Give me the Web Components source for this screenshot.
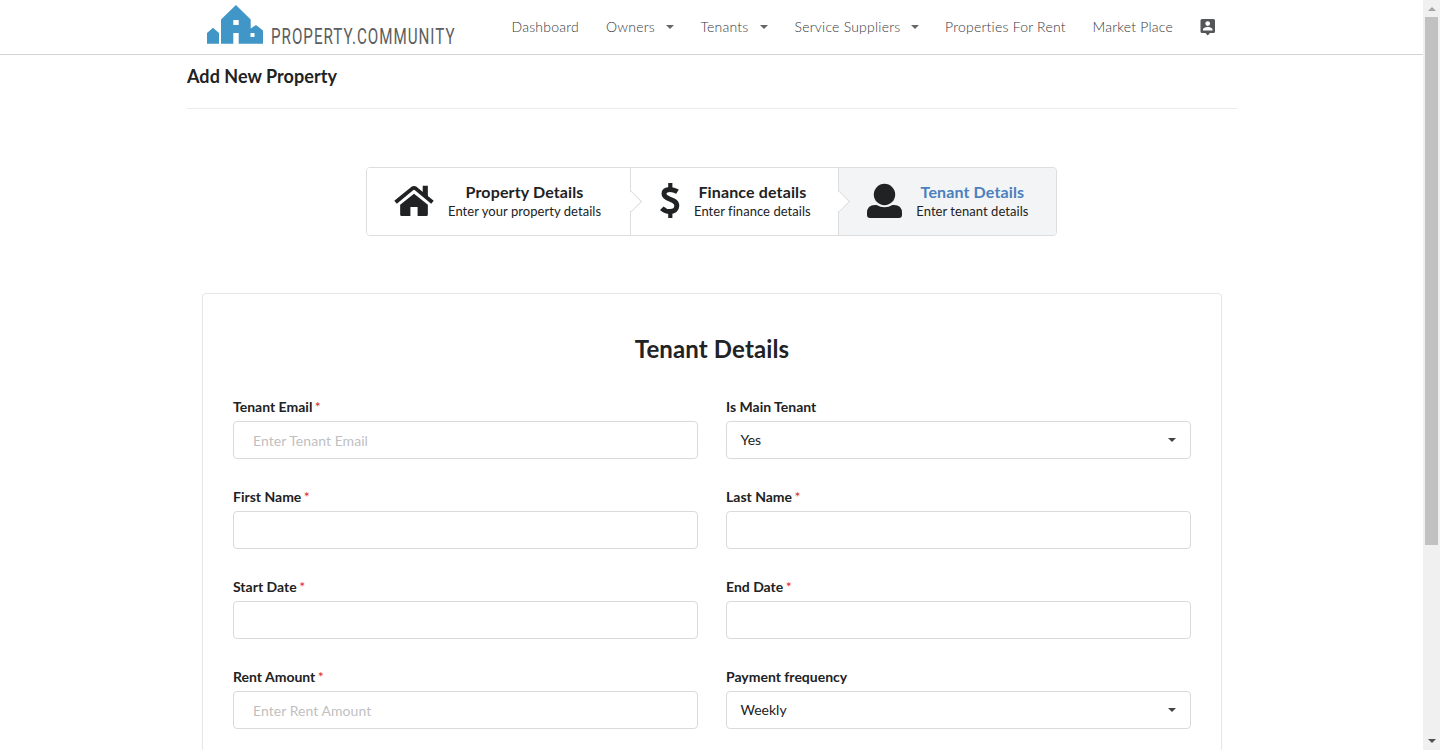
<!DOCTYPE html>
<html lang="en">
<head>
<meta charset="utf-8">
<title>Add New Property</title>
<style>
html,body{margin:0;height:100%;overflow:hidden;background:#fff}
body{font-family:Lato,"Liberation Sans",sans-serif;font-size:14px;line-height:18px;color:#212223}
</style>
</head>
<body>
<property-app></property-app>
<script>
function define(name, html) {
  const t = document.createElement('template');
  t.innerHTML = html;
  customElements.define(name, class extends HTMLElement {
    constructor() {
      super();
      this.attachShadow({ mode: 'open' }).appendChild(t.content.cloneNode(true));
    }
    connectedCallback() {
      for (const a of ['width', 'label-width', 'inset'])
        if (this.hasAttribute(a)) this.style.setProperty('--' + a, this.getAttribute(a) + 'px');
    }
  });
}

define('brand-logo', `
<style>:host{display:block;width:250px;height:48px;flex:none}svg{display:block;overflow:visible}</style>
<svg width="250" height="48" viewBox="0 0 250 48">
  <g fill="#4096c7">
    <path fill-rule="evenodd" d="M15 39.700V15.500L29.900 1 44.700 15.500V24.500L50 21 57 26.500V39.700H32.700V29H27.300V39.700ZM27.300 16V21H32.700V16ZM44.500 29V33H48.500V29Z"/>
    <path d="M1 39.700V29L7 23.800 13 29V39.700Z"/>
  </g>
  <text transform="translate(65 39.700) scale(.69 1)" font-family="Roboto,sans-serif" font-weight="400" font-size="22" fill="#5c5d60" textLength="266" lengthAdjust="spacing">PROPERTY.COMMUNITY</text>
</svg>`);

define('nav-item', `
<style>
:host{display:flex;align-items:center;width:var(--width);flex:none;font-weight:300;color:#38393b;white-space:nowrap;font-size:14px;letter-spacing:.22px}
i{display:none;width:0;height:0;border:4px solid transparent;border-top-color:#666;border-bottom:0;margin-left:11px}
:host([menu]) i{display:block}
span{display:block;width:var(--label-width)}
</style><span><slot></slot></span><i></i>`);

define('account-icon', `
<style>:host{display:block;width:16px;height:17px;flex:none}svg{display:block}</style>
<svg width="16" height="17" viewBox="0 0 16 17"><path fill="#555658" fill-rule="evenodd" d="M2 0H13.500Q15 0 15 1.500V12.500Q15 14 13.500 14H10L7.700 16.500 5.400 14H2Q.5 14 .5 12.500V1.500Q.5 0 2 0ZM7.700 2.200A2.400 2.400 0 1 0 7.700 7 2.400 2.400 0 1 0 7.700 2.200ZM3 11.500H12.500V10.500C12.500 9 9.500 8.100 7.700 8.100S3 9 3 10.500Z"/></svg>`);

define('top-bar', `
<style>
:host{display:flex;align-items:flex-start;box-sizing:border-box;height:55px;border-bottom:1px solid #d4d4d5;padding:4px 0 0 206px}
nav{display:flex;align-items:center;height:46px;margin-left:55.500px}
</style>
<brand-logo></brand-logo>
<nav>
  <nav-item width="94.500">Dashboard</nav-item>
  <nav-item width="94.500" label-width="49" menu>Owners</nav-item>
  <nav-item width="94" label-width="48" menu>Tenants</nav-item>
  <nav-item width="150.500" label-width="105" menu>Service Suppliers</nav-item>
  <nav-item width="147.500">Properties For Rent</nav-item>
  <nav-item width="107.500">Market Place</nav-item>
  <account-icon></account-icon>
</nav>`);

define('step-item', `
<style>
:host{display:flex;position:relative;box-sizing:border-box;width:var(--width);height:100%;align-items:center;gap:14px;border-right:1px solid #dcddde;background:#fff;padding:0 0 2px var(--inset)}
:host([active]){background:#f3f4f5;border-right:0}
.t{text-align:center;white-space:nowrap}
.h{font-size:16px;font-weight:700;line-height:20px;letter-spacing:.13px}
:host([active]) .h{color:#4a80bd}
.d{font-size:13px;line-height:18px;font-weight:400;letter-spacing:.05px}
.a{position:absolute;right:-9px;top:26px;width:15px;height:15px;box-sizing:border-box;background:#fff;border:solid #dcddde;border-width:0 1px 1px 0;transform:rotate(-45deg);z-index:2}
:host([active]) .a{display:none}
::slotted(svg){display:block;flex:none}
</style>
<slot name="icon"></slot>
<div class="t"><div class="h"><slot name="title"></slot></div><div class="d"><slot></slot></div></div>
<div class="a"></div>`);

define('step-group', `
<style>:host{display:flex;box-sizing:border-box;width:691px;height:69px;border:1px solid #dcddde;border-radius:4px;overflow:hidden}</style><slot></slot>`);

define('form-field', `
<style>
:host{display:block}
.l{display:flex;gap:2.500px;font-weight:700;font-size:14px;line-height:18px;height:23px;white-space:nowrap}
b{display:none;color:#db2828;font-weight:400}
:host([required]) b{display:block}
.c{display:flex;align-items:center;justify-content:space-between;box-sizing:border-box;height:38px;border:1px solid #d9dadb;border-radius:4px;background:#fff;padding:0 14px 0 13.500px;font-size:14px}
:host([entry]) .c{padding:2px 19px 0;color:#bfbfbf;letter-spacing:.05px}
i{display:none;width:0;height:0;border:4px solid transparent;border-top-color:#424344;border-bottom:0}
:host([select]) i{display:block}
</style>
<div class="l"><slot name="label"></slot><b>*</b></div>
<div class="c"><span><slot></slot></span><i></i></div>`);

define('form-card', `
<style>
:host{display:block;box-sizing:border-box;width:1020px;height:560px;border:1px solid #e6e7e8;border-radius:4px;padding:39px 30px 0}
h2{margin:0;font-size:24px;line-height:32px;font-weight:700;text-align:center;letter-spacing:.13px}
.g{display:grid;grid-template-columns:1fr 1fr;column-gap:28px;row-gap:29px;margin-top:33px}
</style>
<h2><slot name="title"></slot></h2><div class="g"><slot></slot></div>`);

define('scroll-bar', `
<style>
:host{display:flex;flex-direction:column;align-items:center;width:17px;height:750px;flex:none;background:#f0f0f0}
i{width:0;height:0;border:4px solid transparent}
.u{border-bottom-color:#a3a3a3;border-top:0;margin:7px 0 6px}
.t{width:13px;height:528px;background:#c1c1c1}
.s{flex:1}
.d{border-top-color:#505050;border-bottom:0;margin-bottom:7px}
</style><i class="u"></i><div class="t"></div><div class="s"></div><i class="d"></i>`);

define('property-app', `
<style>
:host{display:flex;height:750px;overflow:hidden}
main{flex:1;min-width:0}
.w{width:1050px;margin-left:187px}
h1{margin:0;box-sizing:border-box;height:54px;padding-top:10px;border-bottom:1px solid #ececec;font-size:18px;line-height:23px;font-weight:700;letter-spacing:.05px}
step-group{margin:58px 0 57px 179px}
form-card{margin-left:15px}
</style>
<main>
<top-bar></top-bar>
<div class="w">
  <h1>Add New Property</h1>
  <step-group>
    <step-item width="264" inset="27">
      <svg slot="icon" width="40" height="32" viewBox="0 0 39 32" preserveAspectRatio="none" fill="#212223"><path d="M19.500 8.800 33 19.800V29.500Q33 31 31.500 31H23V22H16V31H7.500Q6 31 6 29.500V19.800Z"/><path d="M1.500 17.300 18 3.400Q19.500 2.300 21 3.400L37.500 17.300" fill="none" stroke="#212223" stroke-width="3.800"/><path d="M28 .8H33V13L28 9Z"/></svg>
      <span slot="title">Property Details</span>Enter your property details
    </step-item>
    <step-item width="208" inset="29">
      <svg slot="icon" width="20" height="36" viewBox="0 0 20 36" fill="none" stroke="#212223"><path d="M17.500 8.700C15 7.200 12.500 6.400 10 6.400 6 6.400 4 8.200 4 10.800 4 17.500 16.800 15 16.800 22.800 16.800 26.600 14 28.600 10 28.600 7 28.600 4 27.400 1.800 25.200" stroke-width="5"/><path d="M10.300 0V6M10.300 29V35" stroke-width="4.200"/></svg>
      <span slot="title">Finance details</span>Enter finance details
    </step-item>
    <step-item width="217" inset="28.300" active>
      <svg slot="icon" width="35" height="36" viewBox="0 0 35 36" fill="#212223"><circle cx="17.500" cy="11.500" r="10.700"/><path d="M0 32V30Q0 22 8 22H9.500Q17.500 26.500 25.500 22H27Q35 22 35 30V32Q35 35 32 35H3Q0 35 0 32Z"/></svg>
      <span slot="title">Tenant Details</span>Enter tenant details
    </step-item>
  </step-group>
  <form-card>
    <span slot="title">Tenant Details</span>
    <form-field entry required><span slot="label">Tenant Email</span>Enter Tenant Email</form-field>
    <form-field select><span slot="label">Is Main Tenant</span>Yes</form-field>
    <form-field required><span slot="label">First Name</span></form-field>
    <form-field required><span slot="label">Last Name</span></form-field>
    <form-field required><span slot="label">Start Date</span></form-field>
    <form-field required><span slot="label">End Date</span></form-field>
    <form-field entry required><span slot="label">Rent Amount</span>Enter Rent Amount</form-field>
    <form-field select><span slot="label">Payment frequency</span>Weekly</form-field>
  </form-card>
</div>
</main>
<scroll-bar></scroll-bar>`);
</script>
</body>
</html>
